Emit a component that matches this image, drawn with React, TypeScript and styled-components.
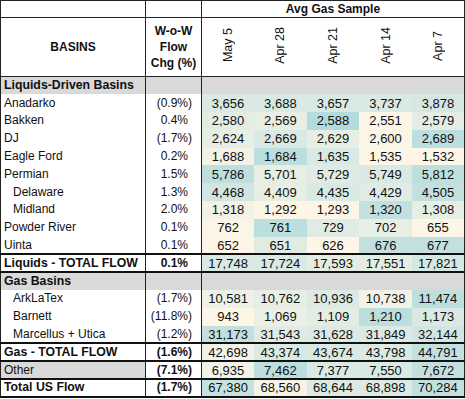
import React from "react";
import styled, { createGlobalStyle } from "styled-components";

const Global = createGlobalStyle`
  html, body { margin: 0; padding: 0; background: #ffffff; }
  body { font-family: "Liberation Sans", Arial, sans-serif; color: #111; }
`;

const Table = styled.table`
  border-collapse: collapse;
  table-layout: fixed;
  width: 464px;
  font-size: 12px;
  border: 1px solid #222;
`;

const HeadCell = styled.th<{ $h?: number }>`
  font-weight: bold;
  text-align: center;
  vertical-align: middle;
  padding: 0;
  height: ${(p) => p.$h ?? 16}px;
  border: 1px solid #222;
  line-height: 16px;
  background: #fff;
`;

const DateHead = styled.th`
  font-weight: normal;
  padding: 0;
  border-top: 1px solid #222;
  border-bottom: 1px solid #222;
  vertical-align: middle;
  text-align: center;
`;

const Rotated = styled.span`
  display: inline-block;
  writing-mode: vertical-rl;
  transform: rotate(180deg);
  font-size: 12.5px;
  line-height: 14px;
`;

const Row = styled.tr<{ $total?: boolean }>`
  height: 17.8px;
  ${(p) =>
    p.$total
      ? `border-top: 2px solid #111; border-bottom: 2px solid #111;`
      : ""}
`;

const Label = styled.td<{ $indent?: boolean; $bold?: boolean; $gray?: boolean }>`
  padding: 0 0 0 ${(p) => (p.$indent ? 12 : 3)}px;
  font-weight: ${(p) => (p.$bold ? "bold" : "normal")};
  font-size: ${(p) => (p.$bold ? 12.3 : 12)}px;
  background: ${(p) => (p.$gray ? "#d9d9d9" : "#ffffff")};
  border-right: 1px solid #222;
  white-space: nowrap;
  line-height: 15px;
`;

const Chg = styled.td<{ $bold?: boolean; $neg?: boolean; $gray?: boolean }>`
  text-align: right;
  padding: 0 ${(p) => (p.$neg ? 9 : 13)}px 0 0;
  font-weight: ${(p) => (p.$bold ? "bold" : "normal")};
  background: ${(p) => (p.$gray ? "#d9d9d9" : "#ffffff")};
  border-right: 1px solid #222;
  white-space: nowrap;
  line-height: 15px;
`;

const Value = styled.td<{ $bg: string }>`
  text-align: center;
  padding: 0;
  font-size: 13px;
  background: ${(p) => p.$bg};
  white-space: nowrap;
  line-height: 15px;
`;

const GrayFill = styled.td`
  background: #d9d9d9;
  padding: 0;
`;

const cream = [253, 246, 231];
const teal = [180, 219, 222];
const mix = (t: number) => {
  const c = cream.map((v, i) => Math.round(v + (teal[i] - v) * t));
  return `rgb(${c[0]},${c[1]},${c[2]})`;
};

type DataRow = {
  kind: "data" | "section" | "total" | "other";
  name: string;
  indent?: boolean;
  chg?: string;
  vals?: string[];
  lv?: number[];
};

const rows: DataRow[] = [
  { kind: "section", name: "Liquids-Driven Basins" },
  { kind: "data", name: "Anadarko", chg: "(0.9%)", vals: ["3,656", "3,688", "3,657", "3,737", "3,878"], lv: [0.5, 0.5, 0.5, 0.5, 0.55] },
  { kind: "data", name: "Bakken", chg: "0.4%", vals: ["2,580", "2,569", "2,588", "2,551", "2,579"], lv: [0.35, 0.3, 1, 0, 0.35] },
  { kind: "data", name: "DJ", chg: "(1.7%)", vals: ["2,624", "2,669", "2,629", "2,600", "2,689"], lv: [0.3, 0.5, 0.3, 0.05, 0.9] },
  { kind: "data", name: "Eagle Ford", chg: "0.2%", vals: ["1,688", "1,684", "1,635", "1,535", "1,532"], lv: [0.15, 0.9, 0.5, 0, 0] },
  { kind: "data", name: "Permian", chg: "1.5%", vals: ["5,786", "5,701", "5,729", "5,749", "5,812"], lv: [0.85, 0.3, 0.4, 0.5, 0.85] },
  { kind: "data", name: "Delaware", indent: true, chg: "1.3%", vals: ["4,468", "4,409", "4,435", "4,429", "4,505"], lv: [0.6, 0.3, 0.5, 0.4, 0.8] },
  { kind: "data", name: "Midland", indent: true, chg: "2.0%", vals: ["1,318", "1,292", "1,293", "1,320", "1,308"], lv: [0.15, 0, 0, 0.8, 0.3] },
  { kind: "data", name: "Powder River", chg: "0.1%", vals: ["762", "761", "729", "702", "655"], lv: [0.05, 0.9, 0.4, 0.3, 0] },
  { kind: "data", name: "Uinta", chg: "0.1%", vals: ["652", "651", "626", "676", "677"], lv: [0, 0.4, 0, 0.8, 0.8] },
  { kind: "total", name: "Liquids - TOTAL FLOW", chg: "0.1%", vals: ["17,748", "17,724", "17,593", "17,551", "17,821"], lv: [0.5, 0.5, 0.35, 0.35, 0.55] },
  { kind: "section", name: "Gas Basins" },
  { kind: "data", name: "ArkLaTex", indent: true, chg: "(1.7%)", vals: ["10,581", "10,762", "10,936", "10,738", "11,474"], lv: [0.2, 0.3, 0.45, 0.15, 0.85] },
  { kind: "data", name: "Barnett", indent: true, chg: "(11.8%)", vals: ["943", "1,069", "1,109", "1,210", "1,173"], lv: [0, 0.25, 0.35, 0.9, 0.5] },
  { kind: "data", name: "Marcellus + Utica", indent: true, chg: "(1.2%)", vals: ["31,173", "31,543", "31,628", "31,849", "32,144"], lv: [0.8, 0.4, 0.45, 0.45, 0.6] },
  { kind: "total", name: "Gas - TOTAL FLOW", chg: "(1.6%)", vals: ["42,698", "43,374", "43,674", "43,798", "44,791"], lv: [0.15, 0.5, 0.5, 0.5, 0.8] },
  { kind: "other", name: "Other", chg: "(7.1%)", vals: ["6,935", "7,462", "7,377", "7,550", "7,672"], lv: [0.15, 0.9, 0.5, 0.5, 0.8] },
  { kind: "total", name: "Total US Flow", chg: "(1.7%)", vals: ["67,380", "68,560", "68,644", "68,898", "70,284"], lv: [0.75, 0.1, 0.45, 0.45, 0.8] },
];

const dates = ["May 5", "Apr 28", "Apr 21", "Apr 14", "Apr 7"];

export default function App() {
  return (
    <>
      <Global />
      <Table>
        <colgroup>
          <col style={{ width: 145 }} />
          <col style={{ width: 56 }} />
          <col style={{ width: 52.6 }} />
          <col style={{ width: 52.6 }} />
          <col style={{ width: 52.6 }} />
          <col style={{ width: 52.6 }} />
          <col style={{ width: 52.6 }} />
        </colgroup>
        <thead>
          <tr>
            <HeadCell $h={16} />
            <HeadCell $h={16} />
            <HeadCell $h={16} colSpan={5}>Avg Gas Sample</HeadCell>
          </tr>
          <tr>
            <HeadCell $h={58}>BASINS</HeadCell>
            <HeadCell $h={58}>
              W-o-W
              <br />
              Flow
              <br />
              Chg (%)
            </HeadCell>
            {dates.map((d) => (
              <DateHead key={d}>
                <Rotated>{d}</Rotated>
              </DateHead>
            ))}
          </tr>
        </thead>
        <tbody>
          {rows.map((r) => {
            if (r.kind === "section") {
              return (
                <Row key={r.name}>
                  <Label $bold $gray>{r.name}</Label>
                  <Chg $gray />
                  <GrayFill colSpan={5} />
                </Row>
              );
            }
            const total = r.kind === "total" || r.kind === "other";
            const neg = (r.chg ?? "").startsWith("(");
            return (
              <Row key={r.name} $total={total}>
                <Label $indent={r.indent} $bold={r.kind === "total"} $gray={r.kind === "other"}>
                  {r.name}
                </Label>
                <Chg $bold={total} $neg={neg}>{r.chg}</Chg>
                {r.vals!.map((v, i) => (
                  <Value key={i} $bg={mix(r.lv![i])}>
                    {v}
                  </Value>
                ))}
              </Row>
            );
          })}
        </tbody>
      </Table>
    </>
  );
}
